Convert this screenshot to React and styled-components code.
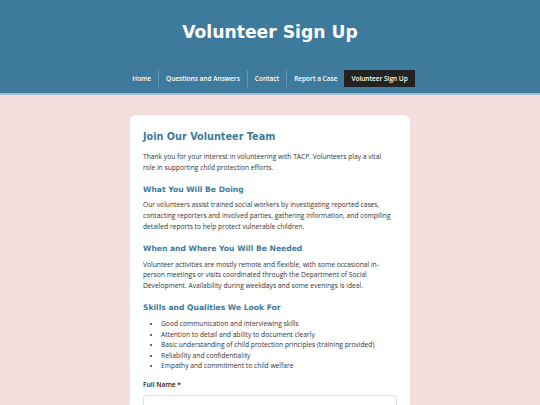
import React from 'react';
import styled, { createGlobalStyle } from 'styled-components';

const GlobalStyle = createGlobalStyle`
  html, body {
    margin: 0;
    padding: 0;
    background-color: #f5dede;
    font-family: "Open Sans", "Liberation Sans", sans-serif;
    color: #333333;
  }
  * {
    box-sizing: border-box;
  }
`;

const Header = styled.header`
  background-color: #3e7a9b;
  border-bottom: 2px solid #a6bccb;
  padding: 21px 0 6px;
  display: flex;
  flex-direction: column;
  align-items: center;
`;

const Title = styled.h1`
  margin: 0;
  font-family: "DejaVu Sans", "Liberation Sans", sans-serif;
  font-weight: bold;
  font-size: 17.2px;
  line-height: 22px;
  color: #ffffff;
`;

const Nav = styled.nav`
  display: flex;
  margin-top: 27px;
`;

const NavLink = styled.a`
  display: flex;
  align-items: center;
  height: 17px;
  padding: 0 7px;
  font-size: 6.5px;
  font-weight: 600;
  color: #ffffff;
  text-decoration: none;
  background-color: ${(props) => (props.active ? '#222222' : 'transparent')};
  border-left: ${(props) => (props.divider ? '1px solid #6a97b0' : 'none')};
`;

const Main = styled.main`
  display: flex;
  justify-content: center;
  padding-top: 20px;
`;

const Card = styled.section`
  width: 280px;
  background-color: #ffffff;
  border-radius: 6px;
  padding: 15px 13px 20px;
`;

const CardTitle = styled.h2`
  margin: 0 0 9px;
  font-family: "DejaVu Sans", "Liberation Sans", sans-serif;
  font-size: 9.7px;
  line-height: 13px;
  font-weight: bold;
  color: #3e7a9b;
`;

const SubTitle = styled.h3`
  margin: 11.5px 0 5.5px;
  font-family: "DejaVu Sans", "Liberation Sans", sans-serif;
  font-size: 7.6px;
  line-height: 10px;
  font-weight: bold;
  color: #3e7a9b;
`;

const Text = styled.p`
  margin: 0;
  max-width: ${(props) => (props.narrow ? '243px' : 'none')};
  font-size: 6.7px;
  line-height: 10.7px;
  color: #333333;
`;

const List = styled.ul`
  margin: 6px 0 0;
  padding-left: 18px;
  font-size: 6.7px;
  line-height: 10.5px;
  color: #333333;
`;

const Label = styled.label`
  display: block;
  margin-top: 8px;
  font-size: 6.7px;
  line-height: 10px;
  font-weight: 600;
  color: #222222;
`;

const Input = styled.input`
  display: block;
  width: 100%;
  height: 22px;
  margin-top: 5px;
  border: 1px solid #dddddd;
  border-radius: 3px;
`;

const navItems = ['Home', 'Questions and Answers', 'Contact', 'Report a Case', 'Volunteer Sign Up'];

const skills = [
  'Good communication and interviewing skills',
  'Attention to detail and ability to document clearly',
  'Basic understanding of child protection principles (training provided)',
  'Reliability and confidentiality',
  'Empathy and commitment to child welfare',
];

const App = () => {
  return (
    <>
      <GlobalStyle />
      <Header>
        <Title>Volunteer Sign Up</Title>
        <Nav>
          {navItems.map((item, i) => (
            <NavLink
              key={item}
              href="#"
              active={item === 'Volunteer Sign Up'}
              divider={i > 0 && i < navItems.length - 1}
            >
              {item}
            </NavLink>
          ))}
        </Nav>
      </Header>
      <Main>
        <Card>
          <CardTitle>Join Our Volunteer Team</CardTitle>
          <Text narrow>
            Thank you for your interest in volunteering with TACP. Volunteers play a vital role in
            supporting child protection efforts.
          </Text>
          <SubTitle>What You Will Be Doing</SubTitle>
          <Text>
            Our volunteers assist trained social workers by investigating reported cases,
            contacting reporters and involved parties, gathering information, and compiling
            detailed reports to help protect vulnerable children.
          </Text>
          <SubTitle>When and Where You Will Be Needed</SubTitle>
          <Text>
            Volunteer activities are mostly remote and flexible, with some occasional in-person
            meetings or visits coordinated through the Department of Social Development.
            Availability during weekdays and some evenings is ideal.
          </Text>
          <SubTitle>Skills and Qualities We Look For</SubTitle>
          <List>
            {skills.map((s) => (
              <li key={s}>{s}</li>
            ))}
          </List>
          <Label htmlFor="fullName">Full Name *</Label>
          <Input id="fullName" type="text" />
        </Card>
      </Main>
    </>
  );
};

export default App;
